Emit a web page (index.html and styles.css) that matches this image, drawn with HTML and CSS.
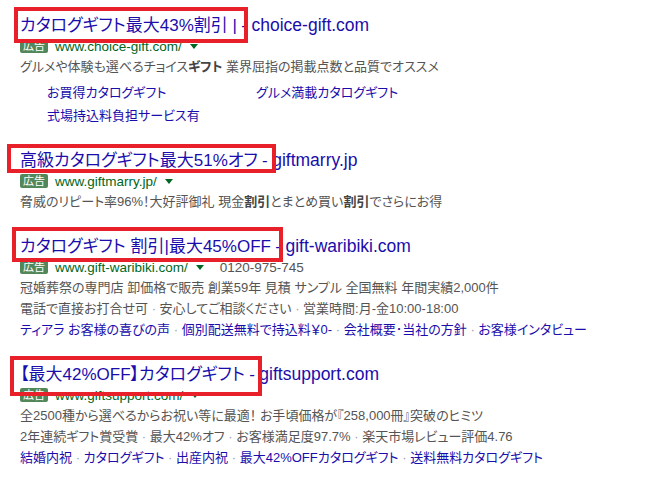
FILE: index.html
```html
<!DOCTYPE html>
<html lang="ja">
<head>
    <meta charset="UTF-8">
    <meta name="viewport" content="width=device-width, initial-scale=1.0">
    <title>広告</title>
    <link rel="stylesheet" href="styles.css">
</head>
<body>
    <div class="results">

        <div class="ad">
            <div class="ad-title">
                <a class="headline">カタログギフト最大43%割引 |</a> <a class="sep">-</a> <a class="domain">choice-gift.com</a>
                <span class="mark mark-1"></span>
            </div>
            <div class="ad-url">
                <span class="badge">広告</span><span class="url">www.choice-gift.com/</span><span class="caret"></span>
            </div>
            <div class="desc">グルメや体験も選べるチョイス<b>ギフト</b> 業界屈指の掲載点数と品質でオススメ</div>
            <div class="sitelinks">
                <a>お買得カタログギフト</a>
                <a>グルメ満載カタログギフト</a>
                <a>式場持込料負担サービス有</a>
            </div>
        </div>

        <div class="ad">
            <div class="ad-title">
                <a class="headline">高級カタログギフト最大51%オフ</a> <a class="sep">-</a> <a class="domain">giftmarry.jp</a>
                <span class="mark mark-2"></span>
            </div>
            <div class="ad-url">
                <span class="badge">広告</span><span class="url">www.giftmarry.jp/</span><span class="caret"></span>
            </div>
            <div class="desc">脅威のリピート率96%！大好評御礼 現金<b>割引</b>とまとめ買い<b>割引</b>でさらにお得</div>
        </div>

        <div class="ad">
            <div class="ad-title">
                <a class="headline">カタログギフト 割引|最大45%OFF</a> <a class="sep">-</a> <a class="domain">gift-waribiki.com</a>
                <span class="mark mark-3"></span>
            </div>
            <div class="ad-url">
                <span class="badge">広告</span><span class="url">www.gift-waribiki.com/</span><span class="caret"></span><span class="phone">0120-975-745</span>
            </div>
            <div class="desc">冠婚葬祭の専門店 卸価格で販売 創業59年 見積 サンプル 全国無料 年間実績2,000件</div>
            <div class="desc">電話で直接お打合せ可 <span class="dot">·</span> 安心してご相談ください <span class="dot">·</span> 営業時間:月-金10:00-18:00</div>
            <div class="desc links">
                <a>ティアラ お客様の喜びの声</a> <span class="dot">·</span> <a>個別配送無料で持込料￥0-</a> <span class="dot">·</span> <a>会社概要･当社の方針</a> <span class="dot">·</span> <a>お客様インタビュー</a>
            </div>
        </div>

        <div class="ad">
            <div class="ad-title">
                <a class="headline">【最大42%OFF】カタログギフト</a> <a class="sep">-</a> <a class="domain">giftsupport.com</a>
                <span class="mark mark-4"></span>
            </div>
            <div class="ad-url">
                <span class="badge">広告</span><span class="url">www.giftsupport.com/</span><span class="caret"></span>
            </div>
            <div class="desc">全2500種から選べるからお祝い等に最適！ お手頃価格が『258,000冊』突破のヒミツ</div>
            <div class="desc">2年連続ギフト賞受賞 <span class="dot">·</span> 最大42%オフ <span class="dot">·</span> お客様満足度97.7% <span class="dot">·</span> 楽天市場レビュー評価4.76</div>
            <div class="desc links">
                <a>結婚内祝</a> <span class="dot">·</span> <a>カタログギフト</a> <span class="dot">·</span> <a>出産内祝</a> <span class="dot">·</span> <a>最大42%OFFカタログギフト</a> <span class="dot">·</span> <a>送料無料カタログギフト</a>
            </div>
        </div>

    </div>
</body>
</html>
```

FILE: styles.css
```css
body {
    margin: 0;
    background: #fff;
    font-family: "Liberation Sans", "Noto Sans CJK JP", sans-serif;
    font-feature-settings: "palt";
    color: #545454;
}
.results {
    padding: 14px 0 0 20px;
}
.ad {
    margin-bottom: 23px;
}
.ad-title {
    position: relative;
    height: 22px;
    line-height: 22px;
    white-space: nowrap;
    color: #1a0dab;
}
.ad-title a {
    color: #1a0dab;
}
.headline {
    font-size: 17px;
}
.sep {
    font-size: 17px;
}
.domain {
    font-size: 17.5px;
}
.mark {
    position: absolute;
    border: 4px solid #e8202a;
    box-sizing: border-box;
}
.mark-1 {
    left: -6px;
    top: -7px;
    width: 234px;
    height: 36px;
}
.mark-2 {
    left: -13px;
    top: -5px;
    width: 269px;
    height: 29px;
}
.mark-3 {
    left: -8px;
    top: -8px;
    width: 271px;
    height: 35px;
}
.mark-4 {
    left: -10px;
    top: -7px;
    width: 252px;
    height: 40px;
}
.ad-url {
    display: flex;
    align-items: center;
    height: 20px;
    white-space: nowrap;
}
.badge {
    width: 28px;
    height: 14px;
    line-height: 14px;
    margin-right: 7px;
    background: #52875a;
    color: #fff;
    font-size: 11px;
    text-align: center;
    border-radius: 2px;
}
.url {
    color: #006621;
    font-size: 13.5px;
}
.caret {
    width: 0;
    height: 0;
    margin-left: 8px;
    border-left: 4px solid transparent;
    border-right: 4px solid transparent;
    border-top: 5px solid #006621;
}
.phone {
    margin-left: 16px;
    font-size: 13.5px;
    color: #545454;
}
.desc {
    font-size: 13px;
    line-height: 21px;
    white-space: nowrap;
}
.desc b {
    color: #444;
}
.dot {
    color: #9aa0a6;
}
.links a {
    color: #1a0dab;
}
.sitelinks {
    display: grid;
    grid-template-columns: 209px 209px;
    grid-auto-rows: 23px;
    align-items: center;
    margin: 3px 0 6px;
    padding-left: 27px;
    font-size: 13px;
}
.sitelinks a {
    color: #1a0dab;
}
```
